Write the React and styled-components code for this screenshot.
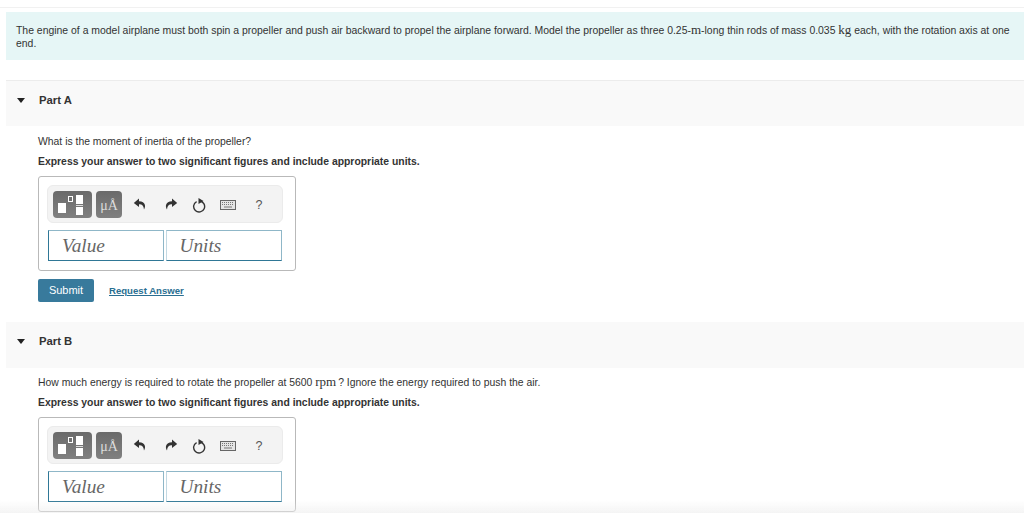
import React from 'react';
import styled, { createGlobalStyle } from 'styled-components';

const Global = createGlobalStyle`
  html, body { margin: 0; padding: 0; height: 513px; overflow: hidden; background: #fff; }
  body { font-family: "Liberation Sans", Arial, sans-serif; color: #333; }
`;

const Page = styled.div`
  height: 513px;
  overflow: hidden;
  padding-top: 7px;
  box-sizing: border-box;
`;

const TopRule = styled.div`
  height: 1px;
  background: #f1f1f1;
  margin-bottom: 4px;
`;

const Intro = styled.div`
  margin-left: 6px;
  height: 48px;
  box-sizing: border-box;
  padding: 12px 10px 0;
  background: #e6f6f6;
  font-size: 10.43px;
  line-height: 13px;
  color: #333;
`;

const MathText = styled.span`
  font-family: "Liberation Serif", serif;
  font-size: 13px;
  line-height: 0;
  margin-right: ${(p) => p.$after || 0}px;
`;

const PartHead = styled.div`
  margin: 20px 0 0 6px;
  height: 46px;
  box-sizing: border-box;
  background: #f9f9f9;
  border-top: ${(p) => (p.$rule ? '1px solid #ececec' : 'none')};
  display: flex;
  align-items: flex-start;
  padding: 13px 0 0 11px;
`;

const Caret = styled.span`
  width: 0;
  height: 0;
  margin-top: 4px;
  border-left: 4.5px solid transparent;
  border-right: 4.5px solid transparent;
  border-top: 5px solid #222;
`;

const PartTitle = styled.span`
  margin-left: 14px;
  font-size: 11.3px;
  font-weight: bold;
  line-height: 13px;
  color: #333;
`;

const PartBody = styled.div`
  padding: ${(p) => p.$top}px 0 0 38px;
`;

const Question = styled.div`
  font-size: 10.4px;
  line-height: 13px;
  color: #333;
`;

const Instruction = styled.div`
  margin-top: 7px;
  font-size: 10.4px;
  line-height: 13px;
  font-weight: bold;
  color: #333;
`;

const AnswerBox = styled.div`
  margin-top: 8px;
  width: 258px;
  height: 95px;
  box-sizing: border-box;
  border: 1px solid #b9b9b9;
  border-radius: 3px;
  padding: 8px 0 0 8px;
  background: #fff;
`;

const Toolbar = styled.div`
  width: 236px;
  height: 38px;
  box-sizing: border-box;
  background: #f3f3f3;
  border: 1px solid #ebebeb;
  border-radius: 6px;
  display: flex;
  align-items: flex-start;
  padding: 5px 0 0 5px;
`;

const ToolButton = styled.div`
  width: ${(p) => p.$w}px;
  height: 27px;
  margin-right: ${(p) => p.$mr || 0}px;
  border-radius: 4px;
  background: linear-gradient(#6a6a6a, #808080);
  display: flex;
  align-items: center;
  justify-content: center;
  flex-shrink: 0;
`;

const MicroLabel = styled.span`
  font-family: "Liberation Serif", serif;
  font-size: 14px;
  color: #dcdcdc;
  position: relative;
  top: 1px;
`;

const IconSlot = styled.div`
  width: ${(p) => p.$w}px;
  height: 27px;
  display: flex;
  align-items: center;
  justify-content: center;
  flex-shrink: 0;
`;

const Help = styled.span`
  font-size: 12.5px;
  color: #555;
  position: relative;
  left: 1px;
`;

const Inputs = styled.div`
  display: flex;
  gap: 2px;
  margin: 7px 0 0 1px;
`;

const Field = styled.div`
  width: 116px;
  height: 31px;
  box-sizing: border-box;
  border: 1px solid #8fb7c8;
  border-bottom-color: #2f7796;
  border-left-color: ${(p) => (p.$second ? '#c3d9e3' : '#2f7796')};
  padding-left: ${(p) => (p.$second ? 12.5 : 13)}px;
  font-family: "Liberation Serif", serif;
  font-style: italic;
  font-size: 19.3px;
  line-height: 30px;
  color: #666;
`;

const Actions = styled.div`
  display: flex;
  align-items: center;
  margin-top: 8px;
`;

const Submit = styled.div`
  width: 56px;
  height: 23px;
  border-radius: 2px;
  background: #387a9c;
  color: #fff;
  font-size: 11px;
  line-height: 23px;
  text-align: center;
`;

const RequestLink = styled.a`
  margin-left: 15px;
  font-size: 9.6px;
  font-weight: bold;
  color: #2a6f92;
  text-decoration: underline;
`;

const BottomFade = styled.div`
  position: fixed;
  left: 0;
  right: 0;
  bottom: 0;
  height: 13px;
  background: linear-gradient(rgba(240, 240, 240, 0), rgba(236, 236, 236, 0.55));
  pointer-events: none;
`;

function TemplatesIcon() {
  return (
    <svg width="29" height="20" viewBox="0 0 29 20">
      <rect x="0" y="8" width="8" height="10" fill="#fff" />
      <rect x="10.5" y="1.5" width="4" height="5" fill="none" stroke="#fff" strokeWidth="1" />
      <rect x="18" y="0" width="7" height="9" fill="#fff" />
      <rect x="18" y="10" width="7" height="1" fill="#ddd" />
      <rect x="18" y="12" width="7" height="8" fill="#fff" />
    </svg>
  );
}

function UndoIcon({ flip }) {
  return (
    <svg width="14" height="13" viewBox="0 0 14 13" style={flip ? { transform: 'scaleX(-1)' } : undefined}>
      <path d="M6 0.5 L0.8 5 L6 9 L6 6.3 C9 6.1 10.6 7.6 11 11.5 C13 8.6 12.8 3.4 6 3.2 Z" fill="#333" />
    </svg>
  );
}

function ResetIcon() {
  return (
    <svg width="14" height="16" viewBox="0 0 14 16">
      <path d="M4.6 4.6 A5.5 5.5 0 1 0 7.5 4" fill="none" stroke="#333" strokeWidth="1.4" />
      <path d="M6.5 1 L11.5 4 L6.5 7 Z" fill="#333" />
    </svg>
  );
}

function KeyboardIcon() {
  return (
    <svg width="16" height="10" viewBox="0 0 16 10">
      <rect x="0.5" y="0.5" width="15" height="9" fill="#e4e4e4" stroke="#666" />
      <path d="M2 2.5 H14 M2 4.5 H14" stroke="#777" strokeWidth="1" strokeDasharray="1 1" />
      <path d="M4 7 H12" stroke="#777" strokeWidth="1" />
    </svg>
  );
}

function AnswerTool() {
  return (
    <AnswerBox>
      <Toolbar>
        <ToolButton $w={39} $mr={4}><TemplatesIcon /></ToolButton>
        <ToolButton $w={26} $mr={6}><MicroLabel>μÅ</MicroLabel></ToolButton>
        <IconSlot $w={24}><UndoIcon /></IconSlot>
        <IconSlot $w={38}><UndoIcon flip /></IconSlot>
        <IconSlot $w={18}><ResetIcon /></IconSlot>
        <IconSlot $w={40}><KeyboardIcon /></IconSlot>
        <IconSlot $w={20}><Help>?</Help></IconSlot>
      </Toolbar>
      <Inputs>
        <Field>Value</Field>
        <Field $second>Units</Field>
      </Inputs>
    </AnswerBox>
  );
}

export default function App() {
  return (
    <Page>
      <Global />
      <TopRule />
      <Intro>
        The engine of a model airplane must both spin a propeller and push air backward to propel the airplane forward. Model the propeller as three 0.25-<MathText>m</MathText>-long thin rods of mass 0.035 <MathText>kg</MathText> each, with the rotation axis at one end.
      </Intro>

      <PartHead $rule>
        <Caret />
        <PartTitle>Part A</PartTitle>
      </PartHead>
      <PartBody $top={9}>
        <Question>What is the moment of inertia of the propeller?</Question>
        <Instruction>Express your answer to two significant figures and include appropriate units.</Instruction>
        <AnswerTool />
        <Actions>
          <Submit>Submit</Submit>
          <RequestLink>Request Answer</RequestLink>
        </Actions>
      </PartBody>

      <PartHead>
        <Caret />
        <PartTitle>Part B</PartTitle>
      </PartHead>
      <PartBody $top={8}>
        <Question>How much energy is required to rotate the propeller at 5600 <MathText $after={2}>rpm</MathText>? Ignore the energy required to push the air.</Question>
        <Instruction>Express your answer to two significant figures and include appropriate units.</Instruction>
        <AnswerTool />
      </PartBody>
      <BottomFade />
    </Page>
  );
}
